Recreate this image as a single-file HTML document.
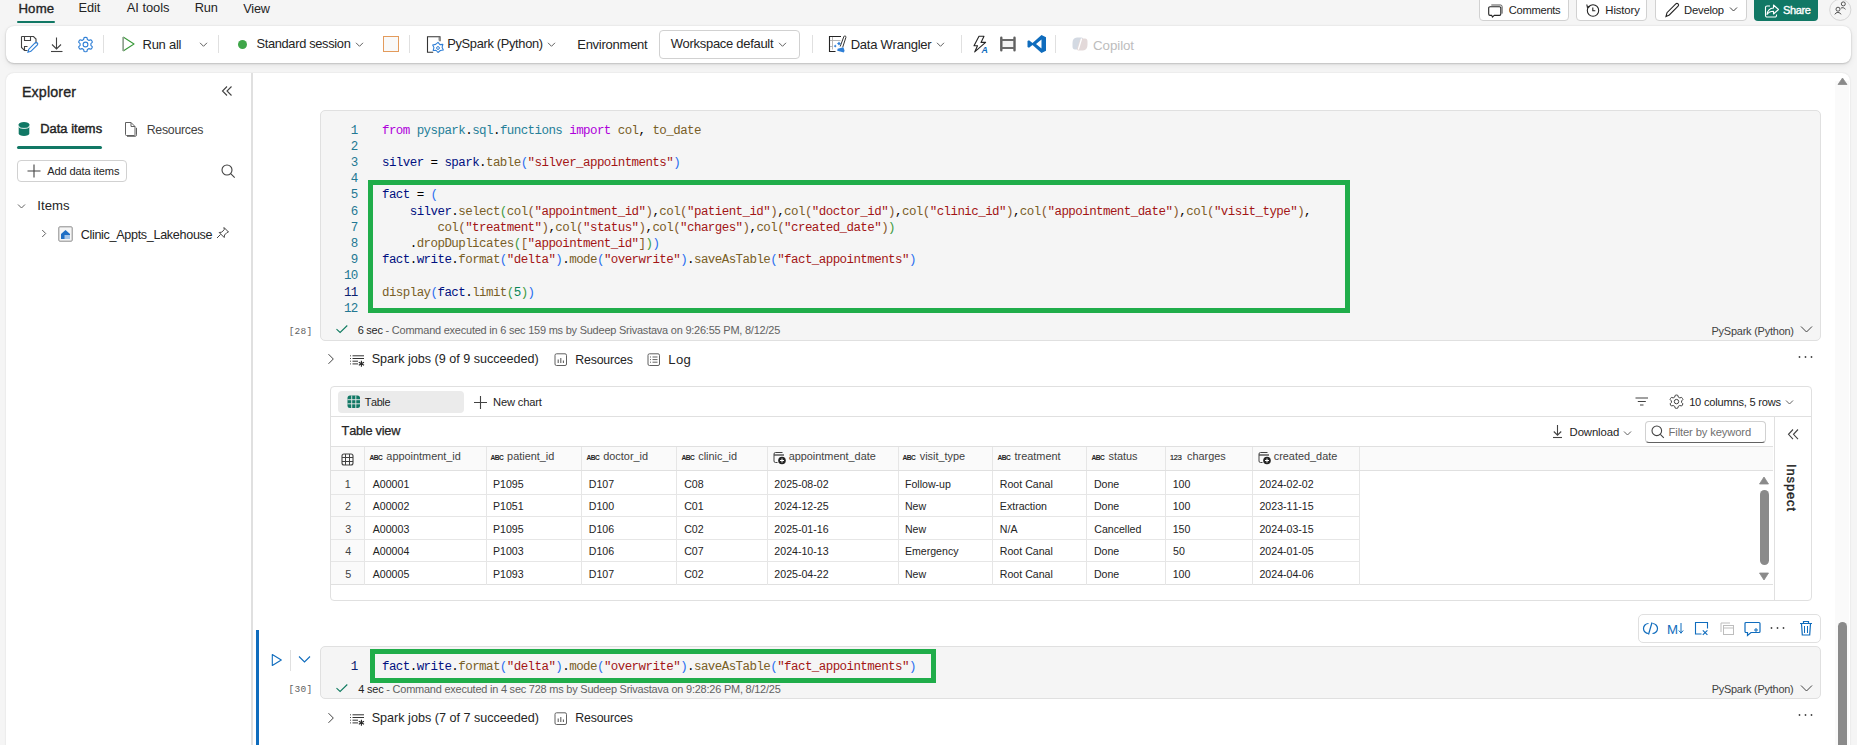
<!DOCTYPE html><html><head><meta charset="utf-8"><style>*{margin:0;padding:0;box-sizing:border-box}
html,body{width:1857px;height:745px;overflow:hidden;background:#f5f5f5;position:relative;font-family:"Liberation Sans",sans-serif}
.t{position:absolute;white-space:pre;line-height:1;font-kerning:none}
.b{position:absolute}
svg.b{overflow:visible}
</style></head><body>
<div class="t" style="left:18.42px;top:2.12px;font-size:13.21px;letter-spacing:0.178px;color:#242424;font-weight:400;font-family:'Liberation Sans', sans-serif;-webkit-text-stroke:0.35px #242424">Home</div>
<div class="t" style="left:78.55px;top:2.49px;font-size:12.77px;letter-spacing:-0.121px;color:#242424;font-weight:400;font-family:'Liberation Sans', sans-serif;">Edit</div>
<div class="t" style="left:126.77px;top:2.38px;font-size:12.9px;letter-spacing:-0.047px;color:#242424;font-weight:400;font-family:'Liberation Sans', sans-serif;">AI tools</div>
<div class="t" style="left:194.65px;top:2.45px;font-size:12.81px;letter-spacing:-0.158px;color:#242424;font-weight:400;font-family:'Liberation Sans', sans-serif;">Run</div>
<div class="t" style="left:243.14px;top:2.56px;font-size:12.69px;letter-spacing:-0.227px;color:#242424;font-weight:400;font-family:'Liberation Sans', sans-serif;">View</div>
<div class="b" style="left:17px;top:21px;width:38px;height:2px;background:#117865;border-radius:1px"></div>
<div class="b" style="left:1479px;top:-4px;width:90px;height:25px;background:#fff;border:1px solid #d1d1d1;border-radius:4px;box-sizing:border-box"></div>
<svg class="b" style="left:1488px;top:3px;" width="16" height="15" viewBox="0 0 16 15" fill="none"><path d="M2 3.8 h9.5 a1.3 1.3 0 0 1 1.3 1.3 v6 a1.3 1.3 0 0 1 -1.3 1.3 h-5.3 l-1.8 1.7 l-0.6 -1.7 h-1.8 a1.3 1.3 0 0 1 -1.3 -1.3 v-6 a1.3 1.3 0 0 1 1.3 -1.3z" stroke="#242424" stroke-width="1.1" stroke-linejoin="round"/><path d="M3.3 2 h9.2 a1.6 1.6 0 0 1 1.6 1.6 v7" stroke="#555" stroke-width="1"/></svg>
<div class="t" style="left:1508.83px;top:5.35px;font-size:11.16px;letter-spacing:-0.298px;color:#242424;font-weight:400;font-family:'Liberation Sans', sans-serif;">Comments</div>
<div class="b" style="left:1576px;top:-4px;width:71px;height:25px;background:#fff;border:1px solid #d1d1d1;border-radius:4px;box-sizing:border-box"></div>
<svg class="b" style="left:1586px;top:3px;" width="14" height="14" viewBox="0 0 14 14" fill="none"><circle cx="7" cy="7.5" r="5.7" stroke="#242424" stroke-width="1.1"/><path d="M6.8 4.5 v3.3 h2.5" stroke="#242424" stroke-width="1.1"/><path d="M0.8 1.5 l0.6 2.8 l2.6 -0.9" stroke="#242424" stroke-width="1.1"/></svg>
<div class="t" style="left:1605.37px;top:5.21px;font-size:11.33px;letter-spacing:-0.133px;color:#242424;font-weight:400;font-family:'Liberation Sans', sans-serif;">History</div>
<div class="b" style="left:1655px;top:-4px;width:92px;height:25px;background:#fff;border:1px solid #d1d1d1;border-radius:4px;box-sizing:border-box"></div>
<svg class="b" style="left:1664px;top:2px;" width="16" height="16" viewBox="0 0 16 16" fill="none"><path d="M2 14.5 l1 -3.8 l8.8 -8.8 a1.6 1.6 0 0 1 2.3 2.3 l-8.8 8.8z" stroke="#242424" stroke-width="1.1"/></svg>
<div class="t" style="left:1684.08px;top:5.28px;font-size:11.24px;letter-spacing:-0.207px;color:#242424;font-weight:400;font-family:'Liberation Sans', sans-serif;">Develop</div>
<svg class="b" style="left:1729px;top:6px;" width="9" height="6" viewBox="0 0 9 6" fill="none"><path d="M1 1.5 l3.5 3.5 l3.5 -3.5" stroke="#424242" stroke-width="1"/></svg>
<div class="b" style="left:1754px;top:-4px;width:64px;height:25px;background:#117865;border-radius:4px"></div>
<svg class="b" style="left:1764px;top:3px;" width="16" height="15" viewBox="0 0 16 15" fill="none"><path d="M9.5 2 l5 4.5 l-5 4.5 v-2.7 c-3 0 -5 1 -6.5 3.2 c0.5 -3.8 2.6 -6.2 6.5 -6.5z" stroke="#fff" stroke-width="1.1" stroke-linejoin="round"/><path d="M6 3 h-3 a1.5 1.5 0 0 0 -1.5 1.5 v8 a1.5 1.5 0 0 0 1.5 1.5 h8 a1.5 1.5 0 0 0 1.5 -1.5 v-1" stroke="#fff" stroke-width="1.1"/></svg>
<div class="t" style="left:1783.00px;top:5.45px;font-size:11.04px;letter-spacing:-0.367px;color:#fff;font-weight:400;font-family:'Liberation Sans', sans-serif;-webkit-text-stroke:0.35px #fff">Share</div>
<svg class="b" style="left:1829px;top:-1px;" width="23" height="23" viewBox="0 0 23 23" fill="none"><circle cx="11.3" cy="10.8" r="10.6" stroke="#d6d6d6" stroke-width="1" fill="#f5f5f5"/><circle cx="14.3" cy="4.9" r="2" stroke="#424242" stroke-width="0.9"/><path d="M11.8 9.2 a3.2 3.2 0 0 1 4.6 1.2" stroke="#424242" stroke-width="0.9"/><circle cx="9" cy="10.2" r="2" stroke="#424242" stroke-width="0.9"/><path d="M5.8 15.4 a3.4 3.4 0 0 1 6.2 0" stroke="#424242" stroke-width="0.9"/></svg>
<div class="b" style="left:6px;top:26px;width:1845px;height:37px;background:#fff;border-radius:8px;box-shadow:0 1px 2px rgba(0,0,0,0.16),0 0 2px rgba(0,0,0,0.10),0 3px 7px rgba(0,0,0,0.06)"></div>
<svg class="b" style="left:20px;top:35px;" width="18" height="18" viewBox="0 0 18 18" fill="none"><path d="M1.5 1.5 h12 l2.5 2.5 v4.5" stroke="#424242" stroke-width="1.1"/><path d="M1.5 1.5 v11 l3 3 h3" stroke="#424242" stroke-width="1.1"/><path d="M4.5 1.5 v4 h6 v-4" stroke="#424242" stroke-width="1.1"/><path d="M4.5 15 v-3.5 h3" stroke="#424242" stroke-width="1.1"/><path d="M8 17.2 l0.8 -3 l6.5 -6.5 a1.5 1.5 0 0 1 2.1 2.1 l-6.5 6.5z" stroke="#2f7fd6" stroke-width="1.2"/></svg>
<svg class="b" style="left:50px;top:36px;" width="14" height="17" viewBox="0 0 14 17" fill="none"><path d="M6.5 1.5 v11.5 M2 8.5 l4.5 4.5 l4.5 -4.5" stroke="#424242" stroke-width="1.1"/><path d="M1 15.5 h11.5" stroke="#424242" stroke-width="1.1"/></svg>
<svg class="b" style="left:77px;top:36px;" width="17" height="17" viewBox="0 0 17 17" fill="none"><path d="M8.5 1.2 l1.4 0.3 l0.5 2 l1.6 0.9 l2 -0.6 l0.9 1.1 l0.5 1.3 l-1.5 1.4 v1.8 l1.5 1.4 l-0.5 1.3 l-0.9 1.1 l-2 -0.6 l-1.6 0.9 l-0.5 2 l-1.4 0.3 l-1.4 -0.3 l-0.5 -2 l-1.6 -0.9 l-2 0.6 l-0.9 -1.1 l-0.5 -1.3 l1.5 -1.4 v-1.8 l-1.5 -1.4 l0.5 -1.3 l0.9 -1.1 l2 0.6 l1.6 -0.9 l0.5 -2z" stroke="#2f7fd6" stroke-width="1.1" stroke-linejoin="round"/><circle cx="8.5" cy="8.5" r="2.4" stroke="#2f7fd6" stroke-width="1.1"/></svg>
<div class="b" style="left:103px;top:35px;width:1px;height:18px;background:#e0e0e0"></div>
<svg class="b" style="left:122px;top:36px;" width="13" height="16" viewBox="0 0 13 16" fill="none"><path d="M1.2 1 v14 M1.2 1 l10.8 7 l-10.8 7" stroke="#3a9a3a" stroke-width="1.1" stroke-linejoin="round"/><path d="M1.2 1 v14" stroke="#9e9e9e" stroke-width="1.3"/></svg>
<div class="t" style="left:142.53px;top:38.20px;font-size:12.99px;letter-spacing:-0.250px;color:#242424;font-weight:400;font-family:'Liberation Sans', sans-serif;">Run all</div>
<svg class="b" style="left:199px;top:41px;" width="9" height="7" viewBox="0 0 9 7" fill="none"><path d="M1 1.8 l3.5 3.5 l3.5 -3.5" stroke="#616161" stroke-width="1"/></svg>
<div class="b" style="left:218px;top:35px;width:1px;height:18px;background:#e0e0e0"></div>
<div class="b" style="left:238px;top:40px;width:9px;height:9px;background:#3fa649;border-radius:50%"></div>
<div class="t" style="left:256.42px;top:38.31px;font-size:12.86px;letter-spacing:-0.330px;color:#242424;font-weight:400;font-family:'Liberation Sans', sans-serif;">Standard session</div>
<svg class="b" style="left:355px;top:41px;" width="9" height="7" viewBox="0 0 9 7" fill="none"><path d="M1 1.8 l3.5 3.5 l3.5 -3.5" stroke="#616161" stroke-width="1"/></svg>
<div class="b" style="left:383px;top:36px;width:16px;height:16px;border:1.3px solid #e39b5c;background:#f9f9f9"></div>
<div class="b" style="left:409px;top:35px;width:1px;height:18px;background:#e0e0e0"></div>
<svg class="b" style="left:426px;top:35px;" width="18" height="18" viewBox="0 0 18 18" fill="none"><path d="M7.2 17.2 h-5.7 v-15.5 h12.5 v4.5" stroke="#333" stroke-width="1.1"/><path d="M12.9 2 v3.5" stroke="#888" stroke-width="0.8"/><g transform="translate(12 13) scale(1.4) translate(-12 -13)"><path d="M12 9 l1.4 1.6 l2.1 -0.2 l-0.6 2.1 l0.9 1.9 l-2.1 0.4 l-1.7 1.4 l-1.4 -1.6 l-2.1 0.2 l0.6 -2.1 l-0.9 -1.9 l2.1 -0.4z" stroke="#2f7fd6" stroke-width="0.75" stroke-linejoin="round" fill="#fff"/><circle cx="12" cy="13" r="1" stroke="#2f7fd6" stroke-width="0.7"/></g></svg>
<div class="t" style="left:447.24px;top:38.30px;font-size:12.87px;letter-spacing:-0.327px;color:#242424;font-weight:400;font-family:'Liberation Sans', sans-serif;">PySpark (Python)</div>
<svg class="b" style="left:547px;top:41px;" width="9" height="7" viewBox="0 0 9 7" fill="none"><path d="M1 1.8 l3.5 3.5 l3.5 -3.5" stroke="#616161" stroke-width="1"/></svg>
<div class="t" style="left:577.23px;top:38.17px;font-size:13.03px;letter-spacing:-0.258px;color:#242424;font-weight:400;font-family:'Liberation Sans', sans-serif;">Environment</div>
<div class="b" style="left:659px;top:30px;width:141px;height:29px;border:1px solid #d1d1d1;border-radius:4px;background:#fff"></div>
<div class="t" style="left:670.64px;top:38.22px;font-size:12.97px;letter-spacing:-0.279px;color:#242424;font-weight:400;font-family:'Liberation Sans', sans-serif;">Workspace default</div>
<svg class="b" style="left:778px;top:41px;" width="9" height="7" viewBox="0 0 9 7" fill="none"><path d="M1 1.8 l3.5 3.5 l3.5 -3.5" stroke="#616161" stroke-width="1"/></svg>
<div class="b" style="left:812px;top:35px;width:1px;height:18px;background:#e0e0e0"></div>
<svg class="b" style="left:828px;top:34px;" width="19" height="19" viewBox="0 0 19 19" fill="none"><path d="M4.5 2.5 v13 M1.5 6.5 h11 M1.5 12.5 h3" stroke="#b0b0b0" stroke-width="0.9"/><path d="M13 2.5 h-11.5 v15 h6" stroke="#242424" stroke-width="1.1"/><path d="M12.2 12.5 l3.6 -9.8 a1.1 1.1 0 0 1 2.1 0.7 l-3.2 9.9" stroke="#333" stroke-width="1"/><path d="M9.6 14.8 l5.8 -1.6 l1.2 3.6 l-0.8 1.7 l-6.6 -1.8z" fill="#2f7fd6"/><path d="M11 7.6 l0.8 1.2 l1.2 0.8 l-1.2 0.8 l-0.8 1.2 l-0.8 -1.2 l-1.2 -0.8 l1.2 -0.8z M7.2 10.6 l0.6 0.9 l0.9 0.6 l-0.9 0.6 l-0.6 0.9 l-0.6 -0.9 l-0.9 -0.6 l0.9 -0.6z" fill="#2f7fd6"/></svg>
<div class="t" style="left:850.63px;top:38.16px;font-size:13.04px;letter-spacing:-0.248px;color:#242424;font-weight:400;font-family:'Liberation Sans', sans-serif;">Data Wrangler</div>
<svg class="b" style="left:936px;top:41px;" width="9" height="7" viewBox="0 0 9 7" fill="none"><path d="M1 1.8 l3.5 3.5 l3.5 -3.5" stroke="#616161" stroke-width="1"/></svg>
<div class="b" style="left:961px;top:35px;width:1px;height:18px;background:#e0e0e0"></div>
<svg class="b" style="left:972px;top:35px;" width="18" height="19" viewBox="0 0 18 19" fill="none"><path d="M7 1.2 h5 l-3 6.2 h4.6 l-10.9 9.5 l2.8 -6.1 h-3.5z" stroke="#242424" stroke-width="1.1" stroke-linejoin="round"/><text x="9.6" y="17.6" font-family="Liberation Sans" font-weight="700" font-style="italic" font-size="8.8" fill="#0f6cbd">A</text></svg>
<svg class="b" style="left:999px;top:37px;" width="18" height="14" viewBox="0 0 18 14" fill="none"><rect x="3" y="3" width="11" height="8" fill="#f3f3f3"/><path d="M2.3 0.8 v12.4 M15.5 0.8 v12.4" stroke="#5f5f5f" stroke-width="2.4" stroke-linecap="round"/><path d="M2.3 3 h13.2 M2.3 11 h13.2" stroke="#6a6a6a" stroke-width="1.8"/></svg>
<svg class="b" style="left:1027px;top:34px;" width="20" height="20" viewBox="0 0 20 20" fill="none"><path d="M14.5 1 l4.5 2.2 v13.6 l-4.5 2.2 l-9 -8 l-3.5 2.8 l-1.5 -0.8 v-6 l1.5 -0.8 l3.5 2.8z M14.5 5.5 l-5.5 4.5 l5.5 4.5z" fill="#0f6cbd" fill-rule="evenodd"/></svg>
<div class="b" style="left:1055px;top:35px;width:1px;height:18px;background:#e0e0e0"></div>
<svg class="b" style="left:1071px;top:36px;" width="18" height="16" viewBox="0 0 18 16" fill="none"><path d="M1.5 7 Q1.5 1.8 6 1.5 h4.5 Q12.5 1.5 12 3.5 L9.2 12 Q8.6 13.6 7 13.5 H4 Q1.2 13.3 1.5 9.5z" fill="#d3d9e2"/><path d="M16.5 8.5 Q16.5 14.2 12 14.5 h-4.5 Q5.5 14.5 6 12.5 L8.8 4 Q9.4 2.4 11 2.5 H14 Q16.8 2.7 16.5 6.5z" fill="#e3d9d9"/><path d="M10.6 2.5 L7.3 13.6" stroke="#fff" stroke-width="1.3"/></svg>
<div class="t" style="left:1093.02px;top:38.60px;font-size:13.35px;letter-spacing:-0.080px;color:#bdbdbd;font-weight:400;font-family:'Liberation Sans', sans-serif;">Copilot</div>
<div class="b" style="left:6px;top:73px;width:1844px;height:687px;background:#fff;border-radius:8px 8px 0 0;box-shadow:0 0 2px rgba(0,0,0,0.12)"></div>
<div class="b" style="left:251px;top:73px;width:2px;height:687px;background:#e0e0e0"></div>
<div class="t" style="left:21.93px;top:85.11px;font-size:14.28px;letter-spacing:0.148px;color:#242424;font-weight:400;font-family:'Liberation Sans', sans-serif;-webkit-text-stroke:0.35px #242424">Explorer</div>
<svg class="b" style="left:221px;top:85px;" width="12" height="12" viewBox="0 0 12 12" fill="none"><path d="M6 1.5 l-4.5 4.5 l4.5 4.5 M10.5 1.5 l-4.5 4.5 l4.5 4.5" stroke="#424242" stroke-width="1.1"/></svg>
<svg class="b" style="left:18px;top:121px;" width="12" height="16" viewBox="0 0 12 16" fill="none"><ellipse cx="6" cy="3.5" rx="5.3" ry="2.6" fill="#117865"/><path d="M0.7 3.5 v9 a5.3 2.6 0 0 0 10.6 0 v-9" fill="#117865"/><path d="M0.7 5 a5.3 2.4 0 0 0 10.6 0" stroke="#fff" stroke-width="0.9"/></svg>
<div class="t" style="left:40.14px;top:123.39px;font-size:12.89px;letter-spacing:0.046px;color:#242424;font-weight:400;font-family:'Liberation Sans', sans-serif;-webkit-text-stroke:0.45px #242424">Data items</div>
<div class="b" style="left:17px;top:146px;width:85px;height:3px;background:#117865;border-radius:1.5px"></div>
<svg class="b" style="left:124px;top:121px;" width="13" height="16" viewBox="0 0 13 16" fill="none"><path d="M1.5 1.5 h5.5 l4 4 v8 a1 1 0 0 1 -1 1 h-7.5 a1 1 0 0 1 -1 -1z" stroke="#616161" stroke-width="1"/><path d="M7 1.5 v4 h4" stroke="#616161" stroke-width="1"/><path d="M3 15.3 h8 a1.5 1.5 0 0 0 1.5 -1.5 v-7" stroke="#616161" stroke-width="1"/></svg>
<div class="t" style="left:146.69px;top:123.86px;font-size:12.33px;letter-spacing:-0.272px;color:#424242;font-weight:400;font-family:'Liberation Sans', sans-serif;">Resources</div>
<div class="b" style="left:17px;top:160px;width:110px;height:22px;border:1px solid #d1d1d1;border-radius:4px;background:#fff"></div>
<svg class="b" style="left:27px;top:164px;" width="14" height="14" viewBox="0 0 14 14" fill="none"><path d="M7 0.5 v13 M0.5 7 h13" stroke="#424242" stroke-width="1.1"/></svg>
<div class="t" style="left:47.18px;top:165.53px;font-size:11.07px;letter-spacing:-0.117px;color:#242424;font-weight:400;font-family:'Liberation Sans', sans-serif;">Add data items</div>
<svg class="b" style="left:221px;top:164px;" width="15" height="14" viewBox="0 0 15 14" fill="none"><circle cx="6" cy="6" r="5" stroke="#424242" stroke-width="1.1"/><path d="M9.7 9.7 l4 4" stroke="#424242" stroke-width="1.1"/></svg>
<svg class="b" style="left:17px;top:203px;" width="9" height="6" viewBox="0 0 9 6" fill="none"><path d="M1 1.5 l3.5 3.5 l3.5 -3.5" stroke="#616161" stroke-width="1"/></svg>
<div class="t" style="left:37.19px;top:198.87px;font-size:13.15px;letter-spacing:0.085px;color:#242424;font-weight:400;font-family:'Liberation Sans', sans-serif;">Items</div>
<svg class="b" style="left:41px;top:229px;" width="6" height="9" viewBox="0 0 6 9" fill="none"><path d="M1.2 1 l3.5 3.5 l-3.5 3.5" stroke="#616161" stroke-width="1"/></svg>
<svg class="b" style="left:58px;top:226px;" width="16" height="16" viewBox="0 0 16 16" fill="none"><rect x="0.8" y="0.8" width="13.4" height="14.4" rx="1" stroke="#8a8a8a" stroke-width="1" fill="#f5f5f5"/><path d="M3 8 l4.5 -4 l4.5 4 v5 h-9z" fill="#1f6fc5"/><rect x="6.5" y="9" width="6" height="4" fill="#fff" opacity="0.6"/></svg>
<div class="t" style="left:80.66px;top:228.84px;font-size:12.59px;letter-spacing:-0.313px;color:#242424;font-weight:400;font-family:'Liberation Sans', sans-serif;">Clinic_Appts_Lakehouse</div>
<svg class="b" style="left:216px;top:226px;" width="14" height="13" viewBox="0 0 14 13" fill="none"><path d="M8 1.5 l4.5 4.5 l-1.5 0.5 l-2.5 2.5 l-0.3 2.5 l-5 -5 l2.5 -0.3 l2.5 -2.5z M4.5 8.5 l-3.5 3.5" stroke="#424242" stroke-width="1" stroke-linejoin="round"/></svg>
<div class="b" style="left:320px;top:110px;width:1501px;height:231px;background:#f5f5f5;border:1px solid #e0e0e0;border-radius:5px"></div>
<div class="t" style="left:350.87px;top:124.52px;font-size:12.5px;letter-spacing:-0.570px;color:#237893;font-family:'Liberation Mono',monospace">1</div>
<div class="t" style="left:382.00px;top:124.52px;font-size:12.5px;letter-spacing:-0.570px;font-family:'Liberation Mono',monospace"><span style="color:#af00db">from</span> <span style="color:#267f99">pyspark</span><span style="color:#000000">.</span><span style="color:#267f99">sql</span><span style="color:#000000">.</span><span style="color:#267f99">functions</span> <span style="color:#af00db">import</span> <span style="color:#795e26">col</span><span style="color:#000000">,</span> <span style="color:#795e26">to_date</span></div>
<div class="t" style="left:350.87px;top:140.72px;font-size:12.5px;letter-spacing:-0.570px;color:#237893;font-family:'Liberation Mono',monospace">2</div>
<div class="t" style="left:350.87px;top:156.92px;font-size:12.5px;letter-spacing:-0.570px;color:#237893;font-family:'Liberation Mono',monospace">3</div>
<div class="t" style="left:382.00px;top:156.92px;font-size:12.5px;letter-spacing:-0.570px;font-family:'Liberation Mono',monospace"><span style="color:#001080">silver</span> <span style="color:#000000">=</span> <span style="color:#001080">spark</span><span style="color:#000000">.</span><span style="color:#795e26">table</span><span style="color:#2a6ef0">(</span><span style="color:#a31515">&quot;silver_appointments&quot;</span><span style="color:#2a6ef0">)</span></div>
<div class="t" style="left:350.87px;top:173.12px;font-size:12.5px;letter-spacing:-0.570px;color:#237893;font-family:'Liberation Mono',monospace">4</div>
<div class="t" style="left:350.87px;top:189.32px;font-size:12.5px;letter-spacing:-0.570px;color:#237893;font-family:'Liberation Mono',monospace">5</div>
<div class="t" style="left:382.00px;top:189.32px;font-size:12.5px;letter-spacing:-0.570px;font-family:'Liberation Mono',monospace"><span style="color:#001080">fact</span> <span style="color:#000000">=</span> <span style="color:#2a6ef0">(</span></div>
<div class="t" style="left:350.87px;top:205.52px;font-size:12.5px;letter-spacing:-0.570px;color:#237893;font-family:'Liberation Mono',monospace">6</div>
<div class="t" style="left:382.00px;top:205.52px;font-size:12.5px;letter-spacing:-0.570px;font-family:'Liberation Mono',monospace">    <span style="color:#001080">silver</span><span style="color:#000000">.</span><span style="color:#795e26">select</span><span style="color:#3d9a3d">(</span><span style="color:#795e26">col</span><span style="color:#86592e">(</span><span style="color:#a31515">&quot;appointment_id&quot;</span><span style="color:#86592e">)</span><span style="color:#000000">,</span><span style="color:#795e26">col</span><span style="color:#86592e">(</span><span style="color:#a31515">&quot;patient_id&quot;</span><span style="color:#86592e">)</span><span style="color:#000000">,</span><span style="color:#795e26">col</span><span style="color:#86592e">(</span><span style="color:#a31515">&quot;doctor_id&quot;</span><span style="color:#86592e">)</span><span style="color:#000000">,</span><span style="color:#795e26">col</span><span style="color:#86592e">(</span><span style="color:#a31515">&quot;clinic_id&quot;</span><span style="color:#86592e">)</span><span style="color:#000000">,</span><span style="color:#795e26">col</span><span style="color:#86592e">(</span><span style="color:#a31515">&quot;appointment_date&quot;</span><span style="color:#86592e">)</span><span style="color:#000000">,</span><span style="color:#795e26">col</span><span style="color:#86592e">(</span><span style="color:#a31515">&quot;visit_type&quot;</span><span style="color:#86592e">)</span><span style="color:#000000">,</span></div>
<div class="t" style="left:350.87px;top:221.72px;font-size:12.5px;letter-spacing:-0.570px;color:#237893;font-family:'Liberation Mono',monospace">7</div>
<div class="t" style="left:382.00px;top:221.72px;font-size:12.5px;letter-spacing:-0.570px;font-family:'Liberation Mono',monospace">        <span style="color:#795e26">col</span><span style="color:#86592e">(</span><span style="color:#a31515">&quot;treatment&quot;</span><span style="color:#86592e">)</span><span style="color:#000000">,</span><span style="color:#795e26">col</span><span style="color:#86592e">(</span><span style="color:#a31515">&quot;status&quot;</span><span style="color:#86592e">)</span><span style="color:#000000">,</span><span style="color:#795e26">col</span><span style="color:#86592e">(</span><span style="color:#a31515">&quot;charges&quot;</span><span style="color:#86592e">)</span><span style="color:#000000">,</span><span style="color:#795e26">col</span><span style="color:#86592e">(</span><span style="color:#a31515">&quot;created_date&quot;</span><span style="color:#86592e">)</span><span style="color:#3d9a3d">)</span></div>
<div class="t" style="left:350.87px;top:237.92px;font-size:12.5px;letter-spacing:-0.570px;color:#237893;font-family:'Liberation Mono',monospace">8</div>
<div class="t" style="left:382.00px;top:237.92px;font-size:12.5px;letter-spacing:-0.570px;font-family:'Liberation Mono',monospace">    <span style="color:#000000">.</span><span style="color:#795e26">dropDuplicates</span><span style="color:#3d9a3d">(</span><span style="color:#86592e">[</span><span style="color:#a31515">&quot;appointment_id&quot;</span><span style="color:#86592e">]</span><span style="color:#3d9a3d">)</span><span style="color:#2a6ef0">)</span></div>
<div class="t" style="left:350.87px;top:254.12px;font-size:12.5px;letter-spacing:-0.570px;color:#237893;font-family:'Liberation Mono',monospace">9</div>
<div class="t" style="left:382.00px;top:254.12px;font-size:12.5px;letter-spacing:-0.570px;font-family:'Liberation Mono',monospace"><span style="color:#001080">fact</span><span style="color:#000000">.</span><span style="color:#001080">write</span><span style="color:#000000">.</span><span style="color:#795e26">format</span><span style="color:#2a6ef0">(</span><span style="color:#a31515">&quot;delta&quot;</span><span style="color:#2a6ef0">)</span><span style="color:#000000">.</span><span style="color:#795e26">mode</span><span style="color:#2a6ef0">(</span><span style="color:#a31515">&quot;overwrite&quot;</span><span style="color:#2a6ef0">)</span><span style="color:#000000">.</span><span style="color:#795e26">saveAsTable</span><span style="color:#2a6ef0">(</span><span style="color:#a31515">&quot;fact_appointments&quot;</span><span style="color:#2a6ef0">)</span></div>
<div class="t" style="left:343.94px;top:270.32px;font-size:12.5px;letter-spacing:-0.570px;color:#237893;font-family:'Liberation Mono',monospace">10</div>
<div class="t" style="left:343.94px;top:286.52px;font-size:12.5px;letter-spacing:-0.570px;color:#0b216f;font-family:'Liberation Mono',monospace">11</div>
<div class="t" style="left:382.00px;top:286.52px;font-size:12.5px;letter-spacing:-0.570px;font-family:'Liberation Mono',monospace"><span style="color:#795e26">display</span><span style="color:#2a6ef0">(</span><span style="color:#001080">fact</span><span style="color:#000000">.</span><span style="color:#795e26">limit</span><span style="color:#3d9a3d">(</span><span style="color:#098658">5</span><span style="color:#3d9a3d">)</span><span style="color:#2a6ef0">)</span></div>
<div class="t" style="left:343.94px;top:302.72px;font-size:12.5px;letter-spacing:-0.570px;color:#237893;font-family:'Liberation Mono',monospace">12</div>
<div class="b" style="left:368px;top:180px;width:982px;height:133px;border:5px solid #20ad4a"></div>
<div class="t" style="left:288.70px;top:327.32px;font-size:9.5px;letter-spacing:0.236px;color:#616161;font-weight:400;font-family:'Liberation Mono', monospace;">[28]</div>
<svg class="b" style="left:335px;top:324px;" width="14" height="11" viewBox="0 0 14 11" fill="none"><path d="M1.5 5.2 l3.6 3.3 l7.2 -7" stroke="#0e7a5f" stroke-width="1.05"/></svg>
<div class="t" style="left:357.64px;top:324.52px;font-size:10.96px;letter-spacing:-0.212px;color:#616161;font-weight:400;font-family:'Liberation Sans', sans-serif;"><span style="color:#242424">6 sec</span> - Command executed in 6 sec 159 ms by Sudeep Srivastava on 9:26:55 PM, 8/12/25</div>
<div class="t" style="left:1711.50px;top:326.02px;font-size:10.96px;letter-spacing:-0.221px;color:#424242;font-weight:400;font-family:'Liberation Sans', sans-serif;">PySpark (Python)</div>
<svg class="b" style="left:1800px;top:325px;" width="13" height="9" viewBox="0 0 13 9" fill="none"><path d="M1 1.5 l5.5 5.5 l5.5 -5.5" stroke="#424242" stroke-width="1"/></svg>
<svg class="b" style="left:327px;top:353.0px;" width="9" height="11.0" viewBox="0 0 9 11.0" fill="none"><path d="M1.5 1.2 l4.8 4.8 l-4.8 4.8" stroke="#424242" stroke-width="1"/></svg>
<svg class="b" style="left:349px;top:355.0px;" width="17" height="14.0" viewBox="0 0 17 14.0" fill="none"><path d="M3.5 0.8 h11.5 M3.5 3.5 h11.5 M3.5 6.2 h5.5 M3.5 8.9 h5.5" stroke="#333" stroke-width="1"/><path d="M1 0.8 h0.9 M1 3.5 h0.9 M1 6.2 h0.9 M1 8.9 h0.9" stroke="#333" stroke-width="1"/><path d="M12.4 5.8 v6 M9.8 7.3 l5.2 3 M9.8 10.3 l5.2 -3" stroke="#242424" stroke-width="1.1"/></svg>
<div class="t" style="left:371.73px;top:353.34px;font-size:12.59px;letter-spacing:-0.007px;color:#242424;font-weight:400;font-family:'Liberation Sans', sans-serif;">Spark jobs (9 of 9 succeeded)</div>
<svg class="b" style="left:554px;top:353.0px;" width="14" height="13.0" viewBox="0 0 14 13.0" fill="none"><rect x="1" y="0.8" width="11.5" height="11.7" rx="1.5" stroke="#616161" stroke-width="1"/><path d="M4.2 10 v-3.5 M6.8 10 v-5 M9.4 10 v-2.5" stroke="#616161" stroke-width="1.1"/></svg>
<div class="t" style="left:575.19px;top:353.55px;font-size:12.34px;letter-spacing:-0.153px;color:#242424;font-weight:400;font-family:'Liberation Sans', sans-serif;">Resources</div>
<svg class="b" style="left:647px;top:353.0px;" width="14" height="13.0" viewBox="0 0 14 13.0" fill="none"><rect x="1" y="0.8" width="11.5" height="11.7" rx="1.5" stroke="#616161" stroke-width="1"/><path d="M5.5 4 h5 M5.5 6.6 h5 M5.5 9.2 h5 M3 4 h1 M3 6.6 h1 M3 9.2 h1" stroke="#616161" stroke-width="1"/></svg>
<div class="t" style="left:668.23px;top:352.91px;font-size:13.1px;letter-spacing:0.381px;color:#242424;font-weight:400;font-family:'Liberation Sans', sans-serif;">Log</div>
<svg class="b" style="left:1798px;top:355px;" width="16" height="4" viewBox="0 0 16 4" fill="none"><circle cx="1.5" cy="2" r="0.9" fill="#424242"/><circle cx="7.5" cy="2" r="0.9" fill="#424242"/><circle cx="13.5" cy="2" r="0.9" fill="#424242"/></svg>
<div class="b" style="left:330px;top:386px;width:1482px;height:215px;background:#fff;border:1px solid #e0e0e0;border-radius:4px"></div>
<div class="b" style="left:331px;top:416px;width:1480px;height:1px;background:#e0e0e0"></div>
<div class="b" style="left:338px;top:391px;width:126px;height:22px;background:#ebebeb;border-radius:4px"></div>
<svg class="b" style="left:347px;top:395px;" width="14" height="14" viewBox="0 0 14 14" fill="none"><rect x="0.5" y="0.5" width="12.5" height="12.5" rx="2.5" fill="#117865"/><path d="M4.7 0.5 v12.5 M8.8 0.5 v12.5 M0.5 4.7 h12.5 M0.5 8.8 h12.5" stroke="#ebebeb" stroke-width="0.9"/></svg>
<div class="t" style="left:364.76px;top:397.09px;font-size:10.88px;letter-spacing:-0.372px;color:#242424;font-weight:400;font-family:'Liberation Sans', sans-serif;">Table</div>
<svg class="b" style="left:473px;top:395px;" width="16" height="15" viewBox="0 0 16 15" fill="none"><path d="M7.5 1 v13 M1 7.5 h13" stroke="#424242" stroke-width="1.1"/></svg>
<div class="t" style="left:493.08px;top:397.04px;font-size:11.17px;letter-spacing:-0.185px;color:#242424;font-weight:400;font-family:'Liberation Sans', sans-serif;">New chart</div>
<svg class="b" style="left:1634px;top:396px;" width="16" height="12" viewBox="0 0 16 12" fill="none"><path d="M1.5 2 h12.5 M3.8 5.5 h8 M6 9 h3.5" stroke="#424242" stroke-width="1.1"/></svg>
<svg class="b" style="left:1669px;top:394px;" width="16" height="16" viewBox="0 0 16 16" fill="none"><path d="M7.5 1 l1.3 0.3 l0.5 1.8 l1.5 0.8 l1.8 -0.5 l0.8 1 l0.5 1.2 l-1.3 1.3 v1.6 l1.3 1.3 l-0.5 1.2 l-0.8 1 l-1.8 -0.5 l-1.5 0.8 l-0.5 1.8 l-1.3 0.3 l-1.3 -0.3 l-0.5 -1.8 l-1.5 -0.8 l-1.8 0.5 l-0.8 -1 l-0.5 -1.2 l1.3 -1.3 v-1.6 l-1.3 -1.3 l0.5 -1.2 l0.8 -1 l1.8 0.5 l1.5 -0.8 l0.5 -1.8z" stroke="#424242" stroke-width="1" stroke-linejoin="round"/><circle cx="7.5" cy="7.6" r="2.2" stroke="#424242" stroke-width="1"/></svg>
<div class="t" style="left:1689.16px;top:397.11px;font-size:11.09px;letter-spacing:-0.205px;color:#242424;font-weight:400;font-family:'Liberation Sans', sans-serif;">10 columns, 5 rows</div>
<svg class="b" style="left:1785px;top:399px;" width="9" height="6" viewBox="0 0 9 6" fill="none"><path d="M1 1.5 l3.5 3.5 l3.5 -3.5" stroke="#616161" stroke-width="1"/></svg>
<div class="t" style="left:341.61px;top:424.60px;font-size:12.76px;letter-spacing:-0.237px;color:#242424;font-weight:400;font-family:'Liberation Sans', sans-serif;-webkit-text-stroke:0.25px #242424">Table view</div>
<svg class="b" style="left:1552px;top:424px;" width="11" height="15" viewBox="0 0 11 15" fill="none"><path d="M5.5 1 v10 M1.8 7.5 l3.7 3.7 l3.7 -3.7" stroke="#424242" stroke-width="1.1"/><path d="M1 13.5 h9" stroke="#424242" stroke-width="1.1"/></svg>
<div class="t" style="left:1569.57px;top:427.21px;font-size:11.33px;letter-spacing:-0.104px;color:#242424;font-weight:400;font-family:'Liberation Sans', sans-serif;">Download</div>
<svg class="b" style="left:1623px;top:430px;" width="9" height="6" viewBox="0 0 9 6" fill="none"><path d="M1 1.5 l3.5 3.5 l3.5 -3.5" stroke="#616161" stroke-width="1"/></svg>
<div class="b" style="left:1645px;top:421px;width:121px;height:22px;border:1px solid #d1d1d1;border-bottom-color:#616161;border-radius:4px;background:#fff"></div>
<svg class="b" style="left:1651px;top:425px;" width="14" height="14" viewBox="0 0 14 14" fill="none"><circle cx="5.8" cy="5.8" r="4.8" stroke="#424242" stroke-width="1.1"/><path d="M9.3 9.3 l3.5 3.5" stroke="#424242" stroke-width="1.1"/></svg>
<div class="t" style="left:1668.58px;top:427.31px;font-size:11.21px;letter-spacing:-0.130px;color:#707070;font-weight:400;font-family:'Liberation Sans', sans-serif;">Filter by keyword</div>
<div class="b" style="left:1774px;top:417px;width:1px;height:183px;background:#e0e0e0"></div>
<svg class="b" style="left:1787px;top:428px;" width="13" height="13" viewBox="0 0 13 13" fill="none"><path d="M6 1.5 l-4.5 4.8 l4.5 4.8 M11 1.5 l-4.5 4.8 l4.5 4.8" stroke="#424242" stroke-width="1.1"/></svg>
<div class="t" style="left:1786px;top:464px;font-size:13px;font-weight:400;color:#242424;-webkit-text-stroke:0.4px #242424;transform-origin:0 0;transform:translate(12px,0) rotate(90deg);letter-spacing:0.85px">Inspect</div>
<div class="b" style="left:331px;top:446px;width:1442px;height:25px;background:#fafafa"></div>
<div class="b" style="left:331px;top:446px;width:1442px;height:1px;background:#e0e0e0"></div>
<div class="b" style="left:331px;top:470px;width:1442px;height:1px;background:#e0e0e0"></div>
<div class="b" style="left:364px;top:447px;width:1px;height:23px;background:#e6e6e6"></div>
<div class="b" style="left:486px;top:447px;width:1px;height:23px;background:#e6e6e6"></div>
<div class="b" style="left:581px;top:447px;width:1px;height:23px;background:#e6e6e6"></div>
<div class="b" style="left:676px;top:447px;width:1px;height:23px;background:#e6e6e6"></div>
<div class="b" style="left:767px;top:447px;width:1px;height:23px;background:#e6e6e6"></div>
<div class="b" style="left:898px;top:447px;width:1px;height:23px;background:#e6e6e6"></div>
<div class="b" style="left:992px;top:447px;width:1px;height:23px;background:#e6e6e6"></div>
<div class="b" style="left:1086px;top:447px;width:1px;height:23px;background:#e6e6e6"></div>
<div class="b" style="left:1165px;top:447px;width:1px;height:23px;background:#e6e6e6"></div>
<div class="b" style="left:1252px;top:447px;width:1px;height:23px;background:#e6e6e6"></div>
<div class="b" style="left:1359px;top:447px;width:1px;height:23px;background:#e6e6e6"></div>
<div class="b" style="left:331px;top:471px;width:33px;height:114px;background:#fafafa"></div>
<div class="b" style="left:331px;top:494px;width:1029px;height:1px;background:#e6e6e6"></div>
<div class="b" style="left:331px;top:516px;width:1029px;height:1px;background:#e6e6e6"></div>
<div class="b" style="left:331px;top:539px;width:1029px;height:1px;background:#e6e6e6"></div>
<div class="b" style="left:331px;top:561px;width:1029px;height:1px;background:#e6e6e6"></div>
<div class="b" style="left:331px;top:584px;width:1442px;height:1px;background:#e0e0e0"></div>
<div class="b" style="left:364px;top:471px;width:1px;height:114px;background:#e6e6e6"></div>
<div class="b" style="left:486px;top:471px;width:1px;height:114px;background:#e6e6e6"></div>
<div class="b" style="left:581px;top:471px;width:1px;height:114px;background:#e6e6e6"></div>
<div class="b" style="left:676px;top:471px;width:1px;height:114px;background:#e6e6e6"></div>
<div class="b" style="left:767px;top:471px;width:1px;height:114px;background:#e6e6e6"></div>
<div class="b" style="left:898px;top:471px;width:1px;height:114px;background:#e6e6e6"></div>
<div class="b" style="left:992px;top:471px;width:1px;height:114px;background:#e6e6e6"></div>
<div class="b" style="left:1086px;top:471px;width:1px;height:114px;background:#e6e6e6"></div>
<div class="b" style="left:1165px;top:471px;width:1px;height:114px;background:#e6e6e6"></div>
<div class="b" style="left:1252px;top:471px;width:1px;height:114px;background:#e6e6e6"></div>
<div class="b" style="left:1359px;top:471px;width:1px;height:114px;background:#e6e6e6"></div>
<svg class="b" style="left:341px;top:453px;" width="13" height="13" viewBox="0 0 13 13" fill="none"><rect x="1" y="1" width="11" height="11" rx="2" stroke="#424242" stroke-width="1.1"/><path d="M1 4.5 h11 M1 8.5 h11 M4.5 1 v11 M8.5 1 v11" stroke="#424242" stroke-width="1"/></svg>
<div class="t" style="left:369.53px;top:454.55px;font-size:6.67px;letter-spacing:-0.551px;color:#242424;font-weight:700;font-family:'Liberation Sans', sans-serif;">ABC</div>
<div class="t" style="left:386.34px;top:451.37px;font-size:10.9px;letter-spacing:0.000px;color:#424242;font-weight:400;font-family:'Liberation Sans', sans-serif;">appointment_id</div>
<div class="t" style="left:490.53px;top:454.55px;font-size:6.67px;letter-spacing:-0.551px;color:#242424;font-weight:700;font-family:'Liberation Sans', sans-serif;">ABC</div>
<div class="t" style="left:507.10px;top:451.37px;font-size:10.9px;letter-spacing:0.000px;color:#424242;font-weight:400;font-family:'Liberation Sans', sans-serif;">patient_id</div>
<div class="t" style="left:586.43px;top:454.55px;font-size:6.67px;letter-spacing:-0.551px;color:#242424;font-weight:700;font-family:'Liberation Sans', sans-serif;">ABC</div>
<div class="t" style="left:603.24px;top:451.37px;font-size:10.9px;letter-spacing:0.000px;color:#424242;font-weight:400;font-family:'Liberation Sans', sans-serif;">doctor_id</div>
<div class="t" style="left:681.43px;top:454.55px;font-size:6.67px;letter-spacing:-0.551px;color:#242424;font-weight:700;font-family:'Liberation Sans', sans-serif;">ABC</div>
<div class="t" style="left:698.24px;top:451.37px;font-size:10.9px;letter-spacing:0.000px;color:#424242;font-weight:400;font-family:'Liberation Sans', sans-serif;">clinic_id</div>
<svg class="b" style="left:772.6px;top:451px;" width="14.0" height="14" viewBox="0 0 14.0 14" fill="none"><path d="M9.5 1.5 h-7 a1.5 1.5 0 0 0 -1.5 1.5 v7 a1.5 1.5 0 0 0 1.5 1.5 h2" stroke="#424242" stroke-width="1"/><path d="M1 4 h10" stroke="#424242" stroke-width="1.3"/><circle cx="9" cy="9.5" r="3.8" fill="#242424"/><path d="M9 7.5 v4 M7 9.5 h4" stroke="#fff" stroke-width="1"/></svg>
<div class="t" style="left:788.64px;top:451.37px;font-size:10.9px;letter-spacing:0.000px;color:#424242;font-weight:400;font-family:'Liberation Sans', sans-serif;">appointment_date</div>
<div class="t" style="left:902.53px;top:454.55px;font-size:6.67px;letter-spacing:-0.551px;color:#242424;font-weight:700;font-family:'Liberation Sans', sans-serif;">ABC</div>
<div class="t" style="left:919.76px;top:451.37px;font-size:10.9px;letter-spacing:0.000px;color:#424242;font-weight:400;font-family:'Liberation Sans', sans-serif;">visit_type</div>
<div class="t" style="left:997.43px;top:454.55px;font-size:6.67px;letter-spacing:-0.551px;color:#242424;font-weight:700;font-family:'Liberation Sans', sans-serif;">ABC</div>
<div class="t" style="left:1014.54px;top:451.37px;font-size:10.9px;letter-spacing:0.000px;color:#424242;font-weight:400;font-family:'Liberation Sans', sans-serif;">treatment</div>
<div class="t" style="left:1091.53px;top:454.55px;font-size:6.67px;letter-spacing:-0.551px;color:#242424;font-weight:700;font-family:'Liberation Sans', sans-serif;">ABC</div>
<div class="t" style="left:1108.50px;top:451.37px;font-size:10.9px;letter-spacing:0.000px;color:#424242;font-weight:400;font-family:'Liberation Sans', sans-serif;">status</div>
<div class="t" style="left:1169.94px;top:454.02px;font-size:7.3px;letter-spacing:-0.151px;color:#242424;font-weight:400;font-family:'Liberation Sans', sans-serif;-webkit-text-stroke:0.2px #242424">123</div>
<div class="t" style="left:1187.04px;top:451.37px;font-size:10.9px;letter-spacing:0.000px;color:#424242;font-weight:400;font-family:'Liberation Sans', sans-serif;">charges</div>
<svg class="b" style="left:1257.7px;top:451px;" width="14.0" height="14" viewBox="0 0 14.0 14" fill="none"><path d="M9.5 1.5 h-7 a1.5 1.5 0 0 0 -1.5 1.5 v7 a1.5 1.5 0 0 0 1.5 1.5 h2" stroke="#424242" stroke-width="1"/><path d="M1 4 h10" stroke="#424242" stroke-width="1.3"/><circle cx="9" cy="9.5" r="3.8" fill="#242424"/><path d="M9 7.5 v4 M7 9.5 h4" stroke="#fff" stroke-width="1"/></svg>
<div class="t" style="left:1273.74px;top:451.37px;font-size:10.9px;letter-spacing:0.000px;color:#424242;font-weight:400;font-family:'Liberation Sans', sans-serif;">created_date</div>
<div class="t" style="left:344.78px;top:478.86px;font-size:10.8px;letter-spacing:0.000px;color:#424242;font-weight:400;font-family:'Liberation Sans', sans-serif;">1</div>
<div class="t" style="left:372.78px;top:479.02px;font-size:10.6px;letter-spacing:0.000px;color:#242424;font-weight:400;font-family:'Liberation Sans', sans-serif;">A00001</div>
<div class="t" style="left:492.93px;top:479.02px;font-size:10.6px;letter-spacing:0.000px;color:#242424;font-weight:400;font-family:'Liberation Sans', sans-serif;">P1095</div>
<div class="t" style="left:588.83px;top:479.02px;font-size:10.6px;letter-spacing:0.000px;color:#242424;font-weight:400;font-family:'Liberation Sans', sans-serif;">D107</div>
<div class="t" style="left:684.16px;top:479.02px;font-size:10.6px;letter-spacing:0.000px;color:#242424;font-weight:400;font-family:'Liberation Sans', sans-serif;">C08</div>
<div class="t" style="left:774.37px;top:479.02px;font-size:10.6px;letter-spacing:0.000px;color:#242424;font-weight:400;font-family:'Liberation Sans', sans-serif;">2025-08-02</div>
<div class="t" style="left:904.93px;top:479.02px;font-size:10.6px;letter-spacing:0.000px;color:#242424;font-weight:400;font-family:'Liberation Sans', sans-serif;">Follow-up</div>
<div class="t" style="left:999.83px;top:479.02px;font-size:10.6px;letter-spacing:0.000px;color:#242424;font-weight:400;font-family:'Liberation Sans', sans-serif;">Root Canal</div>
<div class="t" style="left:1093.93px;top:479.02px;font-size:10.6px;letter-spacing:0.000px;color:#242424;font-weight:400;font-family:'Liberation Sans', sans-serif;">Done</div>
<div class="t" style="left:1172.69px;top:479.02px;font-size:10.6px;letter-spacing:0.000px;color:#242424;font-weight:400;font-family:'Liberation Sans', sans-serif;">100</div>
<div class="t" style="left:1259.47px;top:479.02px;font-size:10.6px;letter-spacing:0.000px;color:#242424;font-weight:400;font-family:'Liberation Sans', sans-serif;">2024-02-02</div>
<div class="t" style="left:345.06px;top:501.06px;font-size:10.8px;letter-spacing:0.000px;color:#424242;font-weight:400;font-family:'Liberation Sans', sans-serif;">2</div>
<div class="t" style="left:372.78px;top:501.22px;font-size:10.6px;letter-spacing:0.000px;color:#242424;font-weight:400;font-family:'Liberation Sans', sans-serif;">A00002</div>
<div class="t" style="left:492.93px;top:501.22px;font-size:10.6px;letter-spacing:0.000px;color:#242424;font-weight:400;font-family:'Liberation Sans', sans-serif;">P1051</div>
<div class="t" style="left:588.83px;top:501.22px;font-size:10.6px;letter-spacing:0.000px;color:#242424;font-weight:400;font-family:'Liberation Sans', sans-serif;">D100</div>
<div class="t" style="left:684.16px;top:501.22px;font-size:10.6px;letter-spacing:0.000px;color:#242424;font-weight:400;font-family:'Liberation Sans', sans-serif;">C01</div>
<div class="t" style="left:774.37px;top:501.22px;font-size:10.6px;letter-spacing:0.000px;color:#242424;font-weight:400;font-family:'Liberation Sans', sans-serif;">2024-12-25</div>
<div class="t" style="left:904.93px;top:501.22px;font-size:10.6px;letter-spacing:0.000px;color:#242424;font-weight:400;font-family:'Liberation Sans', sans-serif;">New</div>
<div class="t" style="left:999.83px;top:501.22px;font-size:10.6px;letter-spacing:0.000px;color:#242424;font-weight:400;font-family:'Liberation Sans', sans-serif;">Extraction</div>
<div class="t" style="left:1093.93px;top:501.22px;font-size:10.6px;letter-spacing:0.000px;color:#242424;font-weight:400;font-family:'Liberation Sans', sans-serif;">Done</div>
<div class="t" style="left:1172.69px;top:501.22px;font-size:10.6px;letter-spacing:0.000px;color:#242424;font-weight:400;font-family:'Liberation Sans', sans-serif;">100</div>
<div class="t" style="left:1259.47px;top:501.22px;font-size:10.6px;letter-spacing:0.000px;color:#242424;font-weight:400;font-family:'Liberation Sans', sans-serif;">2023-11-15</div>
<div class="t" style="left:345.19px;top:523.56px;font-size:10.8px;letter-spacing:0.000px;color:#424242;font-weight:400;font-family:'Liberation Sans', sans-serif;">3</div>
<div class="t" style="left:372.78px;top:523.72px;font-size:10.6px;letter-spacing:0.000px;color:#242424;font-weight:400;font-family:'Liberation Sans', sans-serif;">A00003</div>
<div class="t" style="left:492.93px;top:523.72px;font-size:10.6px;letter-spacing:0.000px;color:#242424;font-weight:400;font-family:'Liberation Sans', sans-serif;">P1095</div>
<div class="t" style="left:588.83px;top:523.72px;font-size:10.6px;letter-spacing:0.000px;color:#242424;font-weight:400;font-family:'Liberation Sans', sans-serif;">D106</div>
<div class="t" style="left:684.16px;top:523.72px;font-size:10.6px;letter-spacing:0.000px;color:#242424;font-weight:400;font-family:'Liberation Sans', sans-serif;">C02</div>
<div class="t" style="left:774.37px;top:523.72px;font-size:10.6px;letter-spacing:0.000px;color:#242424;font-weight:400;font-family:'Liberation Sans', sans-serif;">2025-01-16</div>
<div class="t" style="left:904.93px;top:523.72px;font-size:10.6px;letter-spacing:0.000px;color:#242424;font-weight:400;font-family:'Liberation Sans', sans-serif;">New</div>
<div class="t" style="left:999.83px;top:523.72px;font-size:10.6px;letter-spacing:0.000px;color:#242424;font-weight:400;font-family:'Liberation Sans', sans-serif;">N/A</div>
<div class="t" style="left:1094.26px;top:523.72px;font-size:10.6px;letter-spacing:0.000px;color:#242424;font-weight:400;font-family:'Liberation Sans', sans-serif;">Cancelled</div>
<div class="t" style="left:1172.69px;top:523.72px;font-size:10.6px;letter-spacing:0.000px;color:#242424;font-weight:400;font-family:'Liberation Sans', sans-serif;">150</div>
<div class="t" style="left:1259.47px;top:523.72px;font-size:10.6px;letter-spacing:0.000px;color:#242424;font-weight:400;font-family:'Liberation Sans', sans-serif;">2024-03-15</div>
<div class="t" style="left:345.35px;top:546.16px;font-size:10.8px;letter-spacing:0.000px;color:#424242;font-weight:400;font-family:'Liberation Sans', sans-serif;">4</div>
<div class="t" style="left:372.78px;top:546.32px;font-size:10.6px;letter-spacing:0.000px;color:#242424;font-weight:400;font-family:'Liberation Sans', sans-serif;">A00004</div>
<div class="t" style="left:492.93px;top:546.32px;font-size:10.6px;letter-spacing:0.000px;color:#242424;font-weight:400;font-family:'Liberation Sans', sans-serif;">P1003</div>
<div class="t" style="left:588.83px;top:546.32px;font-size:10.6px;letter-spacing:0.000px;color:#242424;font-weight:400;font-family:'Liberation Sans', sans-serif;">D106</div>
<div class="t" style="left:684.16px;top:546.32px;font-size:10.6px;letter-spacing:0.000px;color:#242424;font-weight:400;font-family:'Liberation Sans', sans-serif;">C07</div>
<div class="t" style="left:774.37px;top:546.32px;font-size:10.6px;letter-spacing:0.000px;color:#242424;font-weight:400;font-family:'Liberation Sans', sans-serif;">2024-10-13</div>
<div class="t" style="left:904.93px;top:546.32px;font-size:10.6px;letter-spacing:0.000px;color:#242424;font-weight:400;font-family:'Liberation Sans', sans-serif;">Emergency</div>
<div class="t" style="left:999.83px;top:546.32px;font-size:10.6px;letter-spacing:0.000px;color:#242424;font-weight:400;font-family:'Liberation Sans', sans-serif;">Root Canal</div>
<div class="t" style="left:1093.93px;top:546.32px;font-size:10.6px;letter-spacing:0.000px;color:#242424;font-weight:400;font-family:'Liberation Sans', sans-serif;">Done</div>
<div class="t" style="left:1173.08px;top:546.32px;font-size:10.6px;letter-spacing:0.000px;color:#242424;font-weight:400;font-family:'Liberation Sans', sans-serif;">50</div>
<div class="t" style="left:1259.47px;top:546.32px;font-size:10.6px;letter-spacing:0.000px;color:#242424;font-weight:400;font-family:'Liberation Sans', sans-serif;">2024-01-05</div>
<div class="t" style="left:345.17px;top:568.76px;font-size:10.8px;letter-spacing:0.000px;color:#424242;font-weight:400;font-family:'Liberation Sans', sans-serif;">5</div>
<div class="t" style="left:372.78px;top:568.92px;font-size:10.6px;letter-spacing:0.000px;color:#242424;font-weight:400;font-family:'Liberation Sans', sans-serif;">A00005</div>
<div class="t" style="left:492.93px;top:568.92px;font-size:10.6px;letter-spacing:0.000px;color:#242424;font-weight:400;font-family:'Liberation Sans', sans-serif;">P1093</div>
<div class="t" style="left:588.83px;top:568.92px;font-size:10.6px;letter-spacing:0.000px;color:#242424;font-weight:400;font-family:'Liberation Sans', sans-serif;">D107</div>
<div class="t" style="left:684.16px;top:568.92px;font-size:10.6px;letter-spacing:0.000px;color:#242424;font-weight:400;font-family:'Liberation Sans', sans-serif;">C02</div>
<div class="t" style="left:774.37px;top:568.92px;font-size:10.6px;letter-spacing:0.000px;color:#242424;font-weight:400;font-family:'Liberation Sans', sans-serif;">2025-04-22</div>
<div class="t" style="left:904.93px;top:568.92px;font-size:10.6px;letter-spacing:0.000px;color:#242424;font-weight:400;font-family:'Liberation Sans', sans-serif;">New</div>
<div class="t" style="left:999.83px;top:568.92px;font-size:10.6px;letter-spacing:0.000px;color:#242424;font-weight:400;font-family:'Liberation Sans', sans-serif;">Root Canal</div>
<div class="t" style="left:1093.93px;top:568.92px;font-size:10.6px;letter-spacing:0.000px;color:#242424;font-weight:400;font-family:'Liberation Sans', sans-serif;">Done</div>
<div class="t" style="left:1172.69px;top:568.92px;font-size:10.6px;letter-spacing:0.000px;color:#242424;font-weight:400;font-family:'Liberation Sans', sans-serif;">100</div>
<div class="t" style="left:1259.47px;top:568.92px;font-size:10.6px;letter-spacing:0.000px;color:#242424;font-weight:400;font-family:'Liberation Sans', sans-serif;">2024-04-06</div>
<svg class="b" style="left:1759px;top:476px;" width="11" height="9" viewBox="0 0 11 9" fill="none"><path d="M5 1 l4.5 7 h-9z" fill="#8a8a8a" stroke="#8a8a8a" stroke-width="0.8" stroke-linejoin="round"/></svg>
<div class="b" style="left:1760px;top:490px;width:9px;height:75px;background:#8a8a8a;border-radius:4.5px"></div>
<svg class="b" style="left:1759px;top:572px;" width="11" height="9" viewBox="0 0 11 9" fill="none"><path d="M5 8 l4.5 -7 h-9z" fill="#8a8a8a" stroke="#8a8a8a" stroke-width="0.8" stroke-linejoin="round"/></svg>
<div class="b" style="left:1638px;top:614px;width:183px;height:29px;background:#fff;border:1px solid #e0e0e0;border-radius:5px"></div>
<svg class="b" style="left:1643px;top:621px;" width="16" height="15" viewBox="0 0 16 15" fill="none"><path d="M5.5 2.5 a5 5 0 1 0 0 10 M9.5 2.5 a5 5 0 1 1 0 10" stroke="#0f6cbd" stroke-width="1.2"/><path d="M9 1.5 l-3.5 12" stroke="#0f6cbd" stroke-width="1.2"/></svg>
<div class="t" style="left:1666.92px;top:622.81px;font-size:13.22px;letter-spacing:0.000px;color:#0f6cbd;font-weight:400;font-family:'Liberation Sans', sans-serif;">M</div>
<svg class="b" style="left:1678px;top:622px;" width="7" height="13" viewBox="0 0 7 13" fill="none"><path d="M3 1 v10.5 M0.8 8.5 l2.2 2.5 l2.2 -2.5" stroke="#0f6cbd" stroke-width="1"/></svg>
<svg class="b" style="left:1693px;top:621px;" width="17" height="16" viewBox="0 0 17 16" fill="none"><path d="M14.5 7.5 v-6 h-12 v11.5 h6" stroke="#0f6cbd" stroke-width="1.1"/><path d="M9.8 9.3 l4.6 4.6 M14.4 9.3 l-4.6 4.6" stroke="#0f6cbd" stroke-width="1.1"/></svg>
<svg class="b" style="left:1719px;top:621px;" width="16" height="15" viewBox="0 0 16 15" fill="none"><rect x="4.5" y="4.5" width="10" height="9" stroke="#bdbdbd" stroke-width="1"/><path d="M2 11 v-9 h9" stroke="#bdbdbd" stroke-width="1"/><path d="M4.5 7 h10" stroke="#bdbdbd" stroke-width="1"/></svg>
<svg class="b" style="left:1744px;top:621px;" width="17" height="16" viewBox="0 0 17 16" fill="none"><path d="M2 1.5 h13 a1 1 0 0 1 1 1 v8 a1 1 0 0 1 -1 1 h-8 l-3.5 3 v-3 h-1.5 a1 1 0 0 1 -1 -1 v-8 a1 1 0 0 1 1 -1z" stroke="#0f6cbd" stroke-width="1.2"/><path d="M12 7 v4 M10 9 h4" stroke="#0f6cbd" stroke-width="1"/></svg>
<svg class="b" style="left:1770px;top:626px;" width="15" height="4" viewBox="0 0 15 4" fill="none"><circle cx="1.5" cy="2" r="0.9" fill="#424242"/><circle cx="7.5" cy="2" r="0.9" fill="#424242"/><circle cx="13.5" cy="2" r="0.9" fill="#424242"/></svg>
<svg class="b" style="left:1799px;top:620px;" width="14" height="17" viewBox="0 0 14 17" fill="none"><path d="M1 3.5 h12 M4.5 3.5 v-2 h5 v2" stroke="#0f6cbd" stroke-width="1.2"/><path d="M2.5 3.5 l0.8 11.5 h7.4 l0.8 -11.5" stroke="#0f6cbd" stroke-width="1.2"/><path d="M5.5 6 v7 M8.5 6 v7" stroke="#0f6cbd" stroke-width="1"/></svg>
<div class="b" style="left:256px;top:630px;width:3px;height:130px;background:#0f6cbd"></div>
<svg class="b" style="left:271px;top:653px;" width="11" height="14" viewBox="0 0 11 14" fill="none"><path d="M1.3 1.5 v11 l9 -5.5z" stroke="#0f6cbd" stroke-width="1.1" stroke-linejoin="round"/></svg>
<div class="b" style="left:290px;top:650px;width:1px;height:21px;background:#e0e0e0"></div>
<svg class="b" style="left:298px;top:655px;" width="13" height="9" viewBox="0 0 13 9" fill="none"><path d="M1 1.5 l5.5 5.5 l5.5 -5.5" stroke="#0f6cbd" stroke-width="1.1"/></svg>
<div class="b" style="left:320px;top:646px;width:1501px;height:53px;background:#f5f5f5;border:1px solid #e0e0e0;border-radius:5px"></div>
<div class="t" style="left:350.87px;top:661.22px;font-size:12.5px;letter-spacing:-0.570px;color:#0b216f;font-family:'Liberation Mono',monospace">1</div>
<div class="t" style="left:382.00px;top:661.22px;font-size:12.5px;letter-spacing:-0.570px;font-family:'Liberation Mono',monospace"><span style="color:#001080">fact</span><span style="color:#000000">.</span><span style="color:#001080">write</span><span style="color:#000000">.</span><span style="color:#795e26">format</span><span style="color:#2a6ef0">(</span><span style="color:#a31515">&quot;delta&quot;</span><span style="color:#2a6ef0">)</span><span style="color:#000000">.</span><span style="color:#795e26">mode</span><span style="color:#2a6ef0">(</span><span style="color:#a31515">&quot;overwrite&quot;</span><span style="color:#2a6ef0">)</span><span style="color:#000000">.</span><span style="color:#795e26">saveAsTable</span><span style="color:#2a6ef0">(</span><span style="color:#a31515">&quot;fact_appointments&quot;</span><span style="color:#2a6ef0">)</span></div>
<div class="b" style="left:370px;top:649px;width:566px;height:34px;border:5px solid #20ad4a"></div>
<div class="t" style="left:288.40px;top:685.32px;font-size:9.5px;letter-spacing:0.336px;color:#616161;font-weight:400;font-family:'Liberation Mono', monospace;">[30]</div>
<svg class="b" style="left:335px;top:683px;" width="14" height="11" viewBox="0 0 14 11" fill="none"><path d="M1.5 5.2 l3.6 3.3 l7.2 -7" stroke="#0e7a5f" stroke-width="1.05"/></svg>
<div class="t" style="left:358.35px;top:683.72px;font-size:10.96px;letter-spacing:-0.214px;color:#616161;font-weight:400;font-family:'Liberation Sans', sans-serif;"><span style="color:#242424">4 sec</span> - Command executed in 4 sec 728 ms by Sudeep Srivastava on 9:28:26 PM, 8/12/25</div>
<div class="t" style="left:1711.70px;top:683.95px;font-size:10.93px;letter-spacing:-0.239px;color:#424242;font-weight:400;font-family:'Liberation Sans', sans-serif;">PySpark (Python)</div>
<svg class="b" style="left:1800px;top:684px;" width="13" height="9" viewBox="0 0 13 9" fill="none"><path d="M1 1.5 l5.5 5.5 l5.5 -5.5" stroke="#424242" stroke-width="1"/></svg>
<svg class="b" style="left:327px;top:711.5px;" width="9" height="11.0" viewBox="0 0 9 11.0" fill="none"><path d="M1.5 1.2 l4.8 4.8 l-4.8 4.8" stroke="#424242" stroke-width="1"/></svg>
<svg class="b" style="left:349px;top:713.5px;" width="17" height="14.0" viewBox="0 0 17 14.0" fill="none"><path d="M3.5 0.8 h11.5 M3.5 3.5 h11.5 M3.5 6.2 h5.5 M3.5 8.9 h5.5" stroke="#333" stroke-width="1"/><path d="M1 0.8 h0.9 M1 3.5 h0.9 M1 6.2 h0.9 M1 8.9 h0.9" stroke="#333" stroke-width="1"/><path d="M12.4 5.8 v6 M9.8 7.3 l5.2 3 M9.8 10.3 l5.2 -3" stroke="#242424" stroke-width="1.1"/></svg>
<div class="t" style="left:371.73px;top:711.83px;font-size:12.6px;letter-spacing:-0.001px;color:#242424;font-weight:400;font-family:'Liberation Sans', sans-serif;">Spark jobs (7 of 7 succeeded)</div>
<svg class="b" style="left:554px;top:711.5px;" width="14" height="13.0" viewBox="0 0 14 13.0" fill="none"><rect x="1" y="0.8" width="11.5" height="11.7" rx="1.5" stroke="#616161" stroke-width="1"/><path d="M4.2 10 v-3.5 M6.8 10 v-5 M9.4 10 v-2.5" stroke="#616161" stroke-width="1.1"/></svg>
<div class="t" style="left:575.19px;top:712.05px;font-size:12.34px;letter-spacing:-0.153px;color:#242424;font-weight:400;font-family:'Liberation Sans', sans-serif;">Resources</div>
<svg class="b" style="left:1798px;top:713px;" width="16" height="4" viewBox="0 0 16 4" fill="none"><circle cx="1.5" cy="2" r="0.9" fill="#424242"/><circle cx="7.5" cy="2" r="0.9" fill="#424242"/><circle cx="13.5" cy="2" r="0.9" fill="#424242"/></svg>
<div class="b" style="left:1835px;top:81px;width:14px;height:679px;background:#fafafa"></div>
<svg class="b" style="left:1837px;top:77px;" width="11" height="8" viewBox="0 0 11 8" fill="none"><path d="M5.5 1 l4.5 6.5 h-9z" fill="#8a8a8a" stroke="#8a8a8a" stroke-width="0.8" stroke-linejoin="round"/></svg>
<div class="b" style="left:1838px;top:622px;width:9px;height:138px;background:#8a8a8a;border-radius:4.5px"></div>
</body></html>
